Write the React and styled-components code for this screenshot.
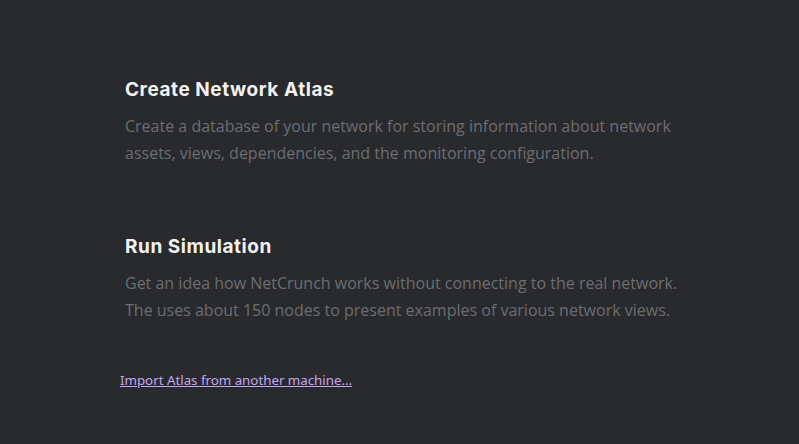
import React from "react";
import styled, { createGlobalStyle } from "styled-components";

const Global = createGlobalStyle`
  html, body {
    margin: 0;
    padding: 0;
    background: #292a2d;
  }
`;

const Page = styled.div`
  width: 799px;
  height: 444px;
  box-sizing: border-box;
  padding: 78px 0 0 125px;
  background: #292a2d;
  display: flex;
  flex-direction: column;
`;

const Section = styled.div`
  display: flex;
  flex-direction: column;
  gap: 11px;
  margin-bottom: ${(p) => p.gap || 0}px;
`;

const Title = styled.h2`
  margin: 0;
  font-family: "Inter", "Noto Sans", sans-serif;
  font-weight: 700;
  font-size: 19px;
  line-height: 24px;
  color: #f2f2f2;
  letter-spacing: 0.55px;
`;

const Text = styled.p`
  margin: 0;
  max-width: 570px;
  font-family: "Open Sans", sans-serif;
  font-size: 16px;
  line-height: 27px;
  color: #6c6e71;
`;

const Link = styled.a`
  margin-left: -5px;
  font-family: "Noto Sans", "DejaVu Sans", sans-serif;
  font-size: 13.3px;
  line-height: 17px;
  color: #c0a6f0;
  text-decoration: underline;
  cursor: pointer;
  align-self: flex-start;
`;

export default function App() {
  return (
    <>
      <Global />
      <Page>
        <Section gap={68}>
          <Title>Create Network Atlas</Title>
          <Text>
            Create a database of your network for storing information about
            network assets, views, dependencies, and the monitoring
            configuration.
          </Text>
        </Section>
        <Section gap={48}>
          <Title>Run Simulation</Title>
          <Text>
            Get an idea how NetCrunch works without connecting to the real
            network. The uses about 150 nodes to present examples of various
            network views.
          </Text>
        </Section>
        <Link>Import Atlas from another machine...</Link>
      </Page>
    </>
  );
}
